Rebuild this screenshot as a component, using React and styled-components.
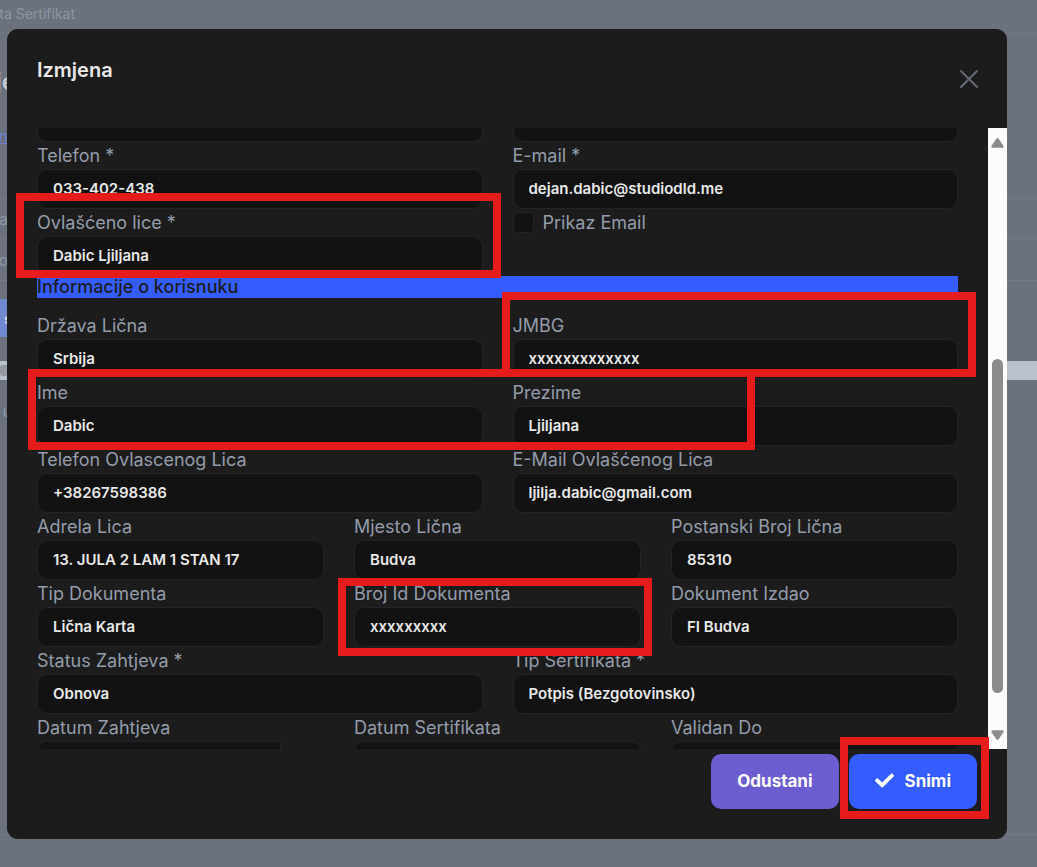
import React, { useLayoutEffect, useRef } from 'react';
import styled, { createGlobalStyle } from 'styled-components';
import { FaCheck } from 'react-icons/fa';

const GlobalStyle = createGlobalStyle`
  * {
    box-sizing: border-box;
  }

  body {
    margin: 0;
    font-family: Inter, 'Liberation Sans', sans-serif;
    background: #6b727d;
  }
`;

// Page under the dimmed backdrop
const Page = styled.div`
  height: 100vh;
  display: flex;
  flex-direction: column;
  overflow: hidden;
  background: #6b727d;
`;

const PageRow = styled.div`
  flex: none;
  display: flex;
  align-items: center;
  height: ${({ $height }) => $height}px;
  color: #8e97a6;
  font-size: 16px;
  white-space: nowrap;
  border-bottom: ${({ $line }) => ($line ? '1px solid #747b86' : 'none')};
`;

const Breadcrumb = styled(PageRow)`
  font-size: 14px;
  padding-bottom: 6px;
`;

const PageHeading = styled(PageRow)`
  color: #c3cbd5;
  font-size: 24px;
  font-weight: 600;
`;

// Page content scrolled partly out on the left
const Clip = styled.span`
  display: flex;
  justify-content: flex-end;
  width: ${({ $width }) => $width}px;
  overflow: hidden;
`;

const PageLink = styled.a`
  color: #6c80d8;
  font-size: 16px;
`;

const PageTab = styled(PageRow)`
  width: 76px;
  padding-left: 4px;
  background: #7088d0;
  color: #d5dbe8;
  font-size: 14px;
  font-weight: 700;
`;

const PageBand = styled(PageRow)`
  background: #b9c1cc;
`;

const BandBox = styled.span`
  width: 40px;
  height: 11px;
  border-radius: 3px;
  background: #949ba5;
`;

const PageSpacer = styled.div`
  flex: 1;
  border-bottom: 1px solid #747b86;
`;

const Overlay = styled.div`
  position: fixed;
  inset: 0;
  padding: 29px 30px 28px 7px;
  display: flex;
`;

const Modal = styled.form`
  position: relative;
  flex: 1;
  min-width: 0;
  display: flex;
  flex-direction: column;
  background: #1c1c1c;
  border-radius: 11px;
`;

const ModalHeader = styled.header`
  flex: none;
  height: 99px;
  padding: 28px 28px 0 30px;
  display: flex;
  justify-content: space-between;
  align-items: flex-start;
`;

const ModalTitle = styled.h2`
  margin: 0;
  color: #e9e9e9;
  font-size: 20px;
  line-height: 26px;
  font-weight: 600;
`;

const CloseButton = styled.button`
  width: 20px;
  height: 44px;
  padding: 0;
  border: none;
  background: none;
  color: #646973;
  cursor: pointer;

  svg {
    display: block;
  }
`;

const ModalBody = styled.div`
  flex: 1;
  min-height: 0;
  display: flex;
`;

const ScrollArea = styled.div`
  flex: 1;
  min-width: 0;
  overflow-y: auto;
  scrollbar-width: none;
  padding: 0 30px;
`;

const Row = styled.div`
  display: grid;
  grid-template-columns: repeat(${({ $cols }) => $cols}, minmax(0, 1fr));
  column-gap: 30px;
`;

const Label = styled.label`
  display: block;
  color: #949cab;
  font-size: 18px;
  line-height: 27px;
  white-space: nowrap;
`;

const Input = styled.input`
  display: block;
  width: 100%;
  height: 40px;
  padding: 0 15px 2px;
  border: 1px solid #22242a;
  border-radius: 10px;
  background: #121212;
  color: #e9e9e9;
  font-family: inherit;
  font-size: 15px;
  font-weight: 600;
  outline: none;
`;

const DateInput = styled(Input)`
  width: 85%;
  border-radius: 10px 0 0 10px;
`;

const CheckRow = styled.div`
  display: flex;
  align-items: center;
  gap: 9px;
  height: 27px;
`;

const Checkbox = styled.input`
  appearance: none;
  width: 21px;
  height: 21px;
  margin: 0;
  border: 1px solid #22242a;
  border-radius: 4px;
  background: #121212;
`;

const SectionTitle = styled.h3`
  margin: 0 0 14px;
  background: #355cff;
  color: #1c1c1c;
  font-size: 18px;
  line-height: 22px;
  font-weight: 500;
`;

const Scrollbar = styled.div`
  flex: none;
  width: 19px;
  padding: 10px 0 9px;
  display: flex;
  flex-direction: column;
  align-items: center;
  background: #fcfcfc;
  color: #8b8b8b;

  svg {
    display: block;
  }
`;

const ScrollThumb = styled.div`
  width: 11px;
  height: 334px;
  margin: auto 0 37px;
  border-radius: 6px;
  background: #8b8b8b;
`;

const ModalFooter = styled.footer`
  flex: none;
  display: flex;
  justify-content: flex-end;
  gap: 10px;
  padding: 5px 30px 30px;
`;

const ActionButton = styled.button`
  display: flex;
  align-items: center;
  gap: 11px;
  height: 55px;
  padding: 0 26px 2px;
  border: none;
  border-radius: 10px;
  background: ${({ $primary }) => ($primary ? '#355cff' : '#6c5dd0')};
  color: #fff;
  font-family: inherit;
  font-size: 17px;
  font-weight: 700;
  cursor: pointer;
`;

// Red frame drawn over the form to point at a field
const Highlight = styled.div`
  position: absolute;
  top: ${({ $top }) => $top}px;
  left: ${({ $left }) => $left}px;
  width: ${({ $width }) => $width}px;
  height: ${({ $height }) => $height}px;
  border: 8px solid #e61b1b;
  pointer-events: none;
`;

const companyRows = [
  [
    { id: 'telefon', label: 'Telefon *', value: '033-402-438' },
    { id: 'email', label: 'E-mail *', value: 'dejan.dabic@studiodld.me' },
  ],
];

const userRows = [
  [
    { id: 'drzava', label: 'Država Lična', value: 'Srbija' },
    { id: 'jmbg', label: 'JMBG', value: 'xxxxxxxxxxxxx' },
  ],
  [
    { id: 'ime', label: 'Ime', value: 'Dabic' },
    { id: 'prezime', label: 'Prezime', value: 'Ljiljana' },
  ],
  [
    { id: 'telefon-lica', label: 'Telefon Ovlascenog Lica', value: '+38267598386' },
    { id: 'email-lica', label: 'E-Mail Ovlašćenog Lica', value: 'ljilja.dabic@gmail.com' },
  ],
  [
    { id: 'adresa', label: 'Adrela Lica', value: '13. JULA 2 LAM 1 STAN 17' },
    { id: 'mjesto', label: 'Mjesto Lična', value: 'Budva' },
    { id: 'postanski-broj', label: 'Postanski Broj Lična', value: '85310' },
  ],
  [
    { id: 'tip-dokumenta', label: 'Tip Dokumenta', value: 'Lična Karta' },
    { id: 'broj-dokumenta', label: 'Broj Id Dokumenta', value: 'xxxxxxxxx' },
    { id: 'izdao', label: 'Dokument Izdao', value: 'FI Budva' },
  ],
  [
    { id: 'status', label: 'Status Zahtjeva *', value: 'Obnova' },
    { id: 'tip-sertifikata', label: 'Tip Sertifikata *', value: 'Potpis (Bezgotovinsko)' },
  ],
  [
    { id: 'datum-zahtjeva', label: 'Datum Zahtjeva', value: '', date: true },
    { id: 'datum-sertifikata', label: 'Datum Sertifikata', value: '' },
    { id: 'validan-do', label: 'Validan Do', value: '' },
  ],
];

const highlights = [
  { top: 164, left: 9, width: 485, height: 85 },
  { top: 263, left: 495, width: 474, height: 85 },
  { top: 340, left: 21, width: 727, height: 81 },
  { top: 549, left: 331, width: 314, height: 78 },
  { top: 708, left: 833, width: 149, height: 82 },
];

const Field = ({ id, label, value, date }) => {
  const Control = date ? DateInput : Input;
  return (
    <div>
      <Label htmlFor={id}>{label}</Label>
      <Control id={id} type="text" defaultValue={value} />
    </div>
  );
};

const FieldRow = ({ fields }) => (
  <Row $cols={fields.length}>
    {fields.map(field => <Field key={field.id} {...field} />)}
  </Row>
);

const App = () => {
  const scrollRef = useRef(null);

  useLayoutEffect(() => {
    scrollRef.current.scrollTop = 26;
  }, []);

  return (
    <>
      <GlobalStyle />
      <Page>
        <Breadcrumb $height={34} $line><Clip $width={75}>ta Sertifikat</Clip></Breadcrumb>
        <PageHeading $height={94}><Clip $width={16}>je</Clip></PageHeading>
        <PageRow $height={15}><PageLink href="#"><Clip $width={8}>n</Clip></PageLink></PageRow>
        <PageRow $height={56} $line />
        <PageRow $height={40} $line><Clip $width={8}>a</Clip></PageRow>
        <PageRow $height={42} $line><Clip $width={8}>o</Clip></PageRow>
        <PageRow $height={18} />
        <PageTab $height={38}>s</PageTab>
        <PageRow $height={24} />
        <PageBand $height={19}><BandBox /></PageBand>
        <PageRow $height={62}><Clip $width={12}>u</Clip></PageRow>
        <PageSpacer />
        <PageRow $height={32} />
      </Page>

      <Overlay>
        <Modal onSubmit={e => e.preventDefault()}>
          <ModalHeader>
            <ModalTitle>Izmjena</ModalTitle>
            <CloseButton type="button" aria-label="Zatvori">
              <svg width="20" height="20" viewBox="0 0 20 20" fill="none" stroke="currentColor" strokeWidth="2" strokeLinecap="round">
                <path d="M2 2 18 18M18 2 2 18" />
              </svg>
            </CloseButton>
          </ModalHeader>

          <ModalBody>
            <ScrollArea ref={scrollRef}>
              <Row $cols={2}>
                <Input type="text" aria-label="Adresa" />
                <Input type="text" aria-label="Mjesto" />
              </Row>
              {companyRows.map(fields => <FieldRow key={fields[0].id} fields={fields} />)}
              <Row $cols={2}>
                <Field id="lice" label="Ovlašćeno lice *" value="Dabic Ljiljana" />
                <CheckRow>
                  <Checkbox id="prikaz-email" type="checkbox" />
                  <Label htmlFor="prikaz-email">Prikaz Email</Label>
                </CheckRow>
              </Row>
              <SectionTitle>Informacije o korisnuku</SectionTitle>
              {userRows.map(fields => <FieldRow key={fields[0].id} fields={fields} />)}
            </ScrollArea>
            <Scrollbar>
              <svg width="13" height="10" viewBox="0 0 13 10" fill="currentColor">
                <path d="M5.5 .6Q6.5-.2 7.5 .6L12.4 7.8Q13 9.6 11.5 9.8H1.5Q0 9.6 .6 7.8Z" />
              </svg>
              <ScrollThumb />
              <svg width="13" height="10" viewBox="0 0 13 10" fill="currentColor">
                <path d="M5.5 9.4Q6.5 10.2 7.5 9.4L12.4 2.2Q13 .4 11.5 .2H1.5Q0 .4 .6 2.2Z" />
              </svg>
            </Scrollbar>
          </ModalBody>

          <ModalFooter>
            <ActionButton type="button">Odustani</ActionButton>
            <ActionButton type="submit" $primary>
              <FaCheck size={19} />
              Snimi
            </ActionButton>
          </ModalFooter>

          {highlights.map(h => (
            <Highlight key={`${h.left}-${h.top}`} $top={h.top} $left={h.left} $width={h.width} $height={h.height} />
          ))}
        </Modal>
      </Overlay>
    </>
  );
};

export default App;
